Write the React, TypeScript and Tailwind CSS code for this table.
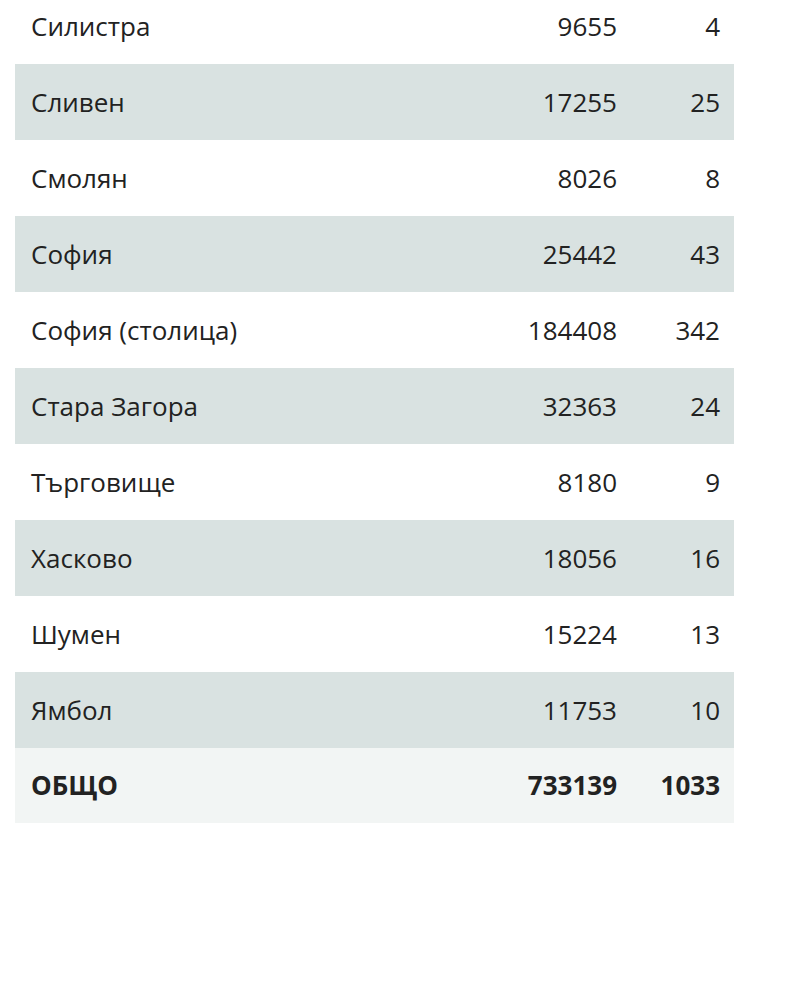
import React from "react";

const rows: [string, string, string][] = [
  ["Силистра", "9655", "4"],
  ["Сливен", "17255", "25"],
  ["Смолян", "8026", "8"],
  ["София", "25442", "43"],
  ["София (столица)", "184408", "342"],
  ["Стара Загора", "32363", "24"],
  ["Търговище", "8180", "9"],
  ["Хасково", "18056", "16"],
  ["Шумен", "15224", "13"],
  ["Ямбол", "11753", "10"],
];

export default function App() {
  return (
    <div className="w-[800px] h-[990px] bg-white overflow-hidden text-[#222] text-[26px]" style={{ fontFamily: '"Open Sans", "Noto Sans", sans-serif' }}>
      <div className="ml-[15px] w-[719px] -mt-[12px]">
        {rows.map((r, i) => (
          <div key={r[0]} className={`flex items-center h-[76px] ${i % 2 === 1 ? "bg-[#d9e2e1]" : "bg-white"}`}>
            <div className="flex-1 pl-[16px]">{r[0]}</div>
            <div className="text-right">{r[1]}</div>
            <div className="w-[117px] pr-[14px] text-right">{r[2]}</div>
          </div>
        ))}
        <div className="flex items-center h-[75px] bg-[#f2f5f4] font-bold">
          <div className="flex-1 pl-[16px]">ОБЩО</div>
          <div className="text-right">733139</div>
          <div className="w-[117px] pr-[14px] text-right">1033</div>
        </div>
      </div>
    </div>
  );
}
